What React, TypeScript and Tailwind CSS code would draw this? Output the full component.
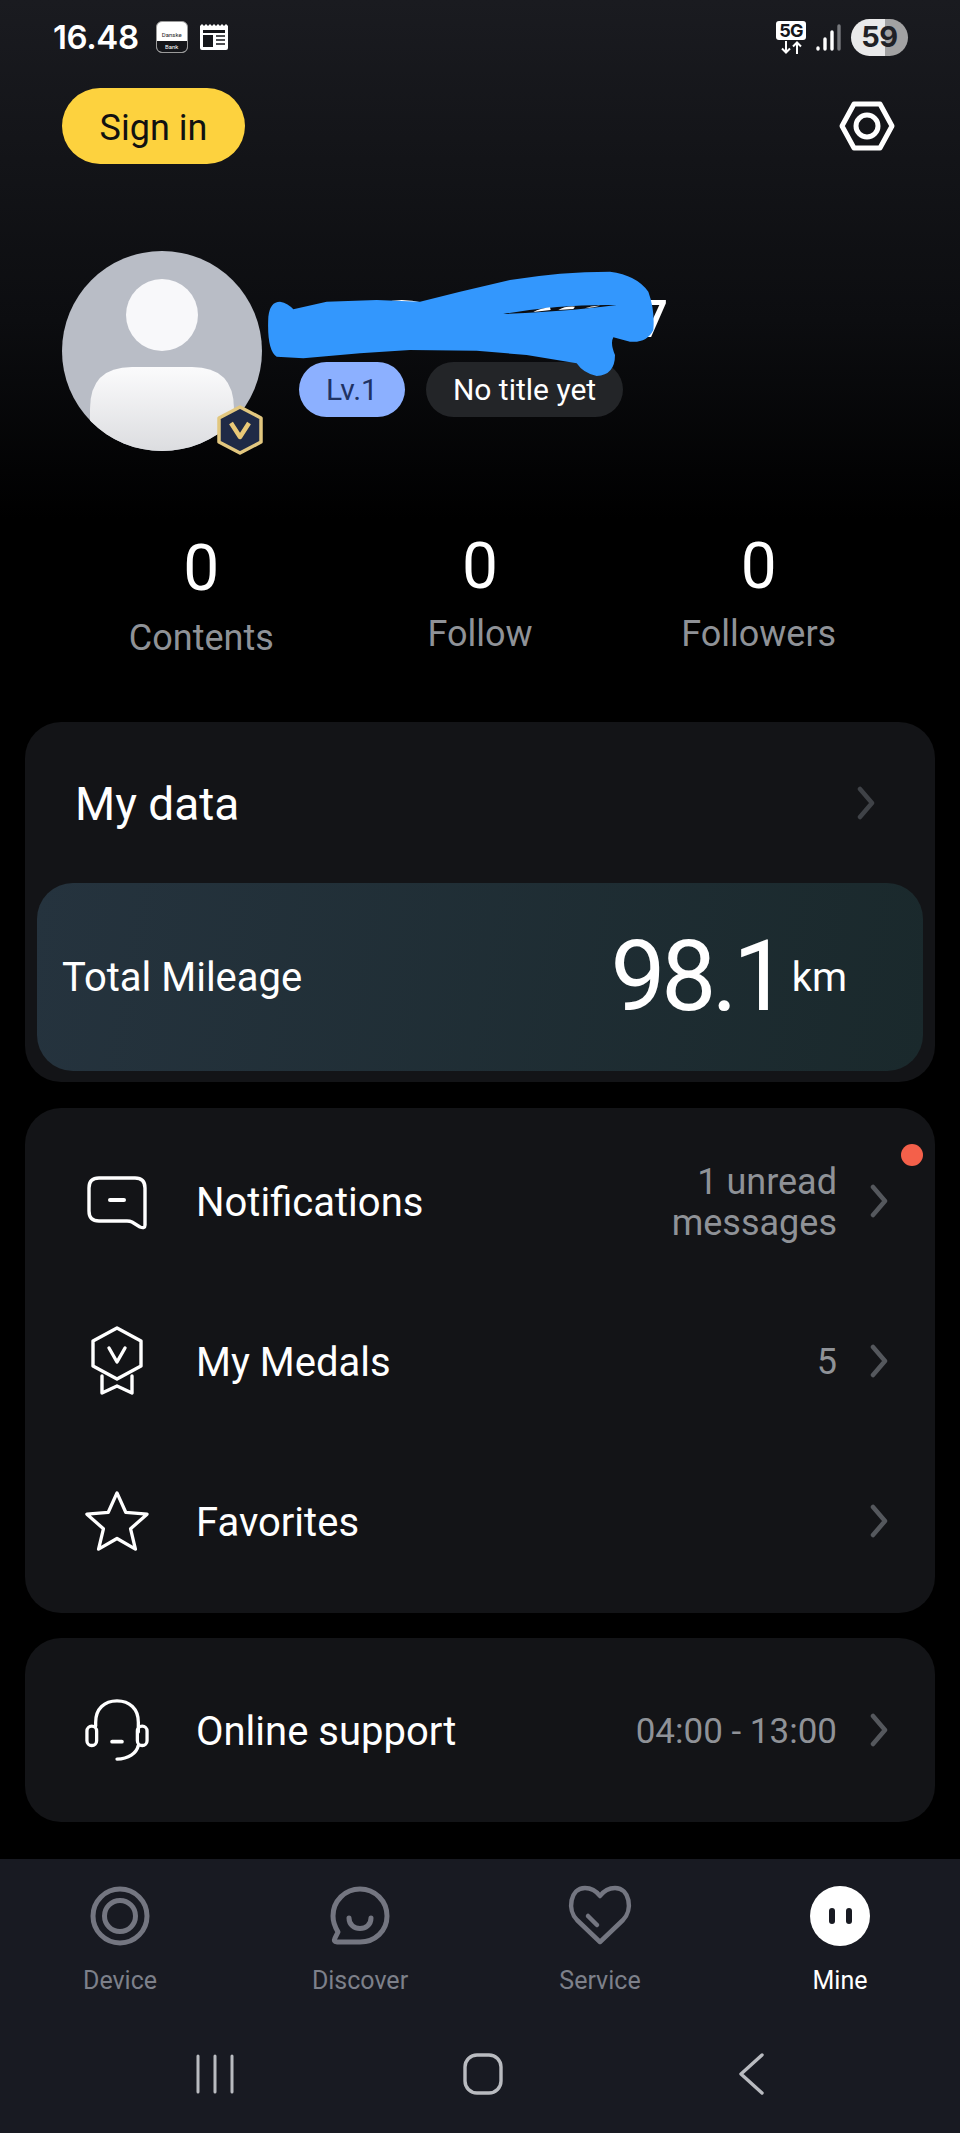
import React from "react";

const Chevron = ({ color = "#55585d" }: { color?: string }) => (
  <svg width="18" height="34" viewBox="0 0 18 34" fill="none" stroke={color} strokeWidth="4.5" strokeLinecap="round" strokeLinejoin="round">
    <path d="M3 3 L15 17 L3 31" />
  </svg>
);

const StatusBar = () => (
  <div className="h-[72px] flex items-center justify-between pl-[53px] pr-[52px] pt-[2px]">
    <div className="flex items-center">
      <span className="font-[family-name:Inter,sans-serif] font-semibold text-[33px] leading-none text-white tracking-[-0.4px]">16.48</span>
      <div className="ml-[17px] w-[32px] h-[32px] rounded-[6px] overflow-hidden bg-white flex flex-col border border-[#9a9a9a]">
        <div className="flex-1 flex items-center justify-center text-[6px] text-[#222] pt-[5px]">Danske</div>
        <div className="h-[11px] bg-[#15161a] flex items-center justify-center text-[6px] text-white">Bank</div>
      </div>
      <svg className="ml-[11px]" width="30" height="28" viewBox="0 0 30 28">
        <path d="M1 3 l2 -2 2 2 2 -2 2 2 2 -2 2 2 2 -2 2 2 2 -2 2 2 2 -2 2 2 2 -2 2 2 V25 a2 2 0 0 1 -2 2 H3 a2 2 0 0 1 -2 -2 Z" fill="#fff" />
        <rect x="4" y="7" width="22" height="3" fill="#15161a" />
        <rect x="4" y="12" width="10" height="12" fill="#15161a" />
        <path d="M17 13 H26 M17 17 H26 M17 21 H26" stroke="#15161a" strokeWidth="1.6" />
      </svg>
    </div>
    <div className="flex items-center">
      <div className="w-[30px] flex flex-col items-center">
        <div className="w-[30px] h-[19px] bg-white rounded-[3px] text-[#15161a] font-bold text-[18px] leading-[19px] text-center font-[family-name:Inter,sans-serif] tracking-[-0.8px]">5G</div>
        <svg className="mt-[1px]" width="24" height="13" viewBox="0 0 24 13" fill="none" stroke="#fff" strokeWidth="2">
          <path d="M7 0 V11 M3 7.5 L7 11.5 L11 7.5 M18 13 V2 M14 5.5 L18 1.5 L22 5.5" />
        </svg>
      </div>
      <svg className="ml-[10px]" width="25" height="27" viewBox="0 0 25 27" strokeLinecap="round" strokeWidth="3.4">
        <path d="M2 24 V25 M9 15 V25 M16 8 V25" stroke="#fff" />
        <path d="M23 2 V25" stroke="#77797d" />
      </svg>
      <div className="ml-[10px] w-[57px] h-[37px] rounded-full bg-[linear-gradient(90deg,#e9e9ea_60%,#a2a2a3_60%)] flex items-center justify-center font-[family-name:Inter,sans-serif] font-bold text-[29px] text-[#202126] tracking-[-0.5px]">59</div>
    </div>
  </div>
);

const Scribble = () => (
  <svg className="absolute left-[260px] top-[9px]" width="420" height="130" viewBox="0 0 1260 390">
    <path fill="#fff" d="M372 128 Q420 112 490 128 Z" />
    <path
      fill="#3397fd"
      d="M25 170 Q30 125 60 125 Q85 130 100 148 L200 125 L350 120 L480 125 L600 95 L750 60 Q900 35 1050 35 Q1130 45 1165 95 Q1185 150 1180 210 Q1160 250 1110 245 L1060 232 Q1050 250 1065 285 Q1065 345 1010 348 Q970 340 950 310 L800 285 L650 272 L450 270 L300 280 L130 295 L50 290 Q20 270 25 170 Z"
    />
    <path fill="#0c0d10" d="M730 162 Q900 132 1070 135 Q950 152 730 162 Z" />
    <path fill="#fff" d="M820 156 Q840 145 870 142 L872 150 Z M895 150 Q915 138 945 140 L940 147 Z M975 145 Q995 136 1020 137 L1000 142 Z" />
  </svg>
);

const Profile = () => (
  <div className="mt-[87px] pl-[62px] flex items-start relative">
    <div className="relative w-[200px] h-[200px]">
      <svg width="200" height="200" viewBox="0 0 200 200">
        <defs>
          <linearGradient id="bodyG" x1="0" y1="0" x2="0" y2="1">
            <stop offset="0" stopColor="#fbfbfc" />
            <stop offset="1" stopColor="#dcdde0" />
          </linearGradient>
          <clipPath id="avClip">
            <circle cx="100" cy="100" r="100" />
          </clipPath>
        </defs>
        <circle cx="100" cy="100" r="100" fill="#b9bdc6" />
        <circle cx="100" cy="64" r="36" fill="#f8f8fa" />
        <path clipPath="url(#avClip)" d="M28 200 V158 Q28 116 70 116 H130 Q172 116 172 158 V200 Z" fill="url(#bodyG)" />
      </svg>
      <svg className="absolute left-[154px] top-[153px]" width="48" height="52" viewBox="0 0 48 52">
        <path d="M24 3 L45 14 V38 L24 49 L3 38 V14 Z" fill="#1f2a46" stroke="#e2c77f" strokeWidth="3.5" strokeLinejoin="round" />
        <path d="M15 19 L24 33 L33 19" fill="none" stroke="#e9c877" strokeWidth="4.5" strokeLinejoin="round" />
      </svg>
    </div>
    <div className="ml-[37px] w-[369px] pt-[41px]">
      <div className="h-[70px] flex justify-end items-start text-white text-[52px] leading-[56px] font-medium">7</div>
      <div className="flex gap-[21px]">
        <div className="w-[106px] h-[55px] rounded-full bg-[#8cb0ff] flex items-center justify-center text-[30px] text-[#1f3263]">Lv.1</div>
        <div className="w-[197px] h-[55px] rounded-full bg-[#232528] flex items-center justify-center text-[30px] text-white">No title yet</div>
      </div>
    </div>
    <Scribble />
  </div>
);

const Stat = ({ n, label, low }: { n: string; label: string; low?: boolean }) => (
  <div className={`flex flex-col items-center ${low ? "pt-[2px]" : ""}`}>
    <div className="text-[64px] leading-[70px] text-white">{n}</div>
    <div className={`${low ? "mt-[10px]" : "mt-[8px]"} text-[36px] leading-[48px] text-[#8f9297]`}>{label}</div>
  </div>
);

const Row = ({ icon, label, right, rightClass }: { icon: React.ReactNode; label: string; right?: React.ReactNode; rightClass?: string }) => (
  <div className="h-[160px] flex items-center pl-[60px] pr-[47px]">
    <div className="w-[64px] h-[80px] flex items-center justify-center">{icon}</div>
    <div className="ml-[47px] pt-[3px] text-[40px] text-white flex-1">{label}</div>
    {right && <div className={`text-right pt-[3px] leading-[41px] text-[#8f9297] ${rightClass ?? "text-[36px]"}`}>{right}</div>}
    <div className="ml-[33px]"><Chevron /></div>
  </div>
);

const iconStroke = { fill: "none", stroke: "#fff", strokeWidth: 3.4, strokeLinecap: "round" as const, strokeLinejoin: "round" as const };

const NotifIcon = () => (
  <svg className="mt-[4px]" width="60" height="54" viewBox="0 0 60 54" {...iconStroke}>
    <path d="M12 2 H48 Q58 2 58 12 V49 Q58 53 53 51 L45 46 Q43 45 40 45 H12 Q2 45 2 35 V12 Q2 2 12 2 Z" />
    <path d="M23 24 H37" strokeWidth="4" />
  </svg>
);
const MedalIcon = () => (
  <svg width="54" height="70" viewBox="0 0 54 70" {...iconStroke}>
    <path d="M27 2 L51 15 V40 L27 53 L3 40 V15 Z" />
    <path d="M19 22 L27 36 L35 22" />
    <path d="M12 50 V67 L27 60 L42 67 V50" />
  </svg>
);
const StarIcon = () => (
  <svg width="66" height="62" viewBox="0 0 66 62" {...iconStroke}>
    <path d="M33 2 L42 22 L64 24 L47 39 L52 60 L33 49 L14 60 L19 39 L2 24 L24 22 Z" />
  </svg>
);
const SupportIcon = () => (
  <svg width="66" height="64" viewBox="0 0 66 64" {...iconStroke}>
    <path d="M11 28 V24 C11 10 20 2 33 2 C46 2 55 10 55 24 V34" />
    <rect x="2" y="28" width="10" height="20" rx="5" />
    <rect x="54" y="28" width="10" height="20" rx="5" />
    <path d="M28 44 H38" strokeWidth="4" />
    <path d="M55 48 C53 56 45 62 33 62" />
  </svg>
);

const Tab = ({ icon, label, active }: { icon: React.ReactNode; label: string; active?: boolean }) => (
  <div className="flex flex-col items-center">
    <div className="h-[62px] flex items-center justify-center">{icon}</div>
    <div className={`mt-[20px] text-[25px] leading-[28px] ${active ? "text-white" : "text-[#7d808a]"}`}>{label}</div>
  </div>
);

const navStroke = { fill: "none", stroke: "#747681", strokeLinecap: "round" as const, strokeLinejoin: "round" as const };

export default function App() {
  return (
    <div className="w-[960px] h-[2133px] overflow-hidden flex flex-col bg-black font-[family-name:Roboto,sans-serif]">
      <div className="h-[722px] bg-[linear-gradient(180deg,#1a1b20_0px,#0c0d10_320px,#000000_520px)]">
        <StatusBar />
        <div className="mt-[16px] h-[76px] pl-[62px] pr-[65px] flex items-center justify-between">
          <div className="w-[183px] h-[76px] pt-[4px] rounded-full bg-[#fdd23e] flex items-center justify-center text-[36px] text-[#111]">Sign in</div>
          <svg width="56" height="50" viewBox="0 0 56 50" fill="none" stroke="#fff" strokeWidth="5" strokeLinejoin="round">
            <path d="M3 25 L15 3 H41 L53 25 L41 47 H15 Z" />
            <circle cx="28" cy="25" r="11" />
          </svg>
        </div>
        <Profile />
        <div className="mt-[81px] px-[62px] grid grid-cols-3">
          <Stat n="0" label="Contents" low />
          <Stat n="0" label="Follow" />
          <Stat n="0" label="Followers" />
        </div>
      </div>

      <div className="mx-[25px] h-[360px] rounded-[36px] bg-[#131417] px-[12px] pb-[11px] flex flex-col">
        <div className="flex-1 flex items-center justify-between pl-[38px] pr-[48px]">
          <div className="text-[46px] pt-[4px] text-white">My data</div>
          <Chevron color="#3f4247" />
        </div>
        <div className="h-[188px] rounded-[36px] bg-[linear-gradient(100deg,#25333e,#1a292c)] flex items-center pl-[25px] pr-[76px]">
          <div className="text-[40px] pt-[2px] text-white flex-1">Total Mileage</div>
          <div className="text-[98px] leading-none text-white tracking-[-4.5px]">98.1</div>
          <div className="ml-[8px] text-[40px] pt-[2px] text-white">km</div>
        </div>
      </div>

      <div className="relative mt-[26px] mx-[25px] h-[505px] rounded-[36px] bg-[#131417] py-[13px]">
        <Row icon={<NotifIcon />} label="Notifications" right={<>1 unread<br />messages</>} />
        <Row icon={<MedalIcon />} label="My Medals" right="5" />
        <Row icon={<StarIcon />} label="Favorites" />
        <div className="absolute right-[12px] top-[36px] w-[22px] h-[22px] rounded-full bg-[#f4604a]" />
      </div>

      <div className="mt-[25px] mx-[25px] h-[184px] rounded-[36px] bg-[#131417] flex flex-col justify-center">
        <Row icon={<SupportIcon />} label="Online support" right="04:00 - 13:00" rightClass="text-[35px]" />
      </div>

      <div className="mt-[37px] flex-1 bg-[#181a22] flex flex-col">
        <div className="pt-[26px] grid grid-cols-4">
          <Tab label="Device" icon={
            <svg width="60" height="60" viewBox="0 0 60 60" {...navStroke} strokeWidth="5">
              <circle cx="30" cy="30" r="27" />
              <circle cx="30" cy="30" r="15.5" />
            </svg>
          } />
          <Tab label="Discover" icon={
            <svg width="60" height="60" viewBox="0 0 60 60" {...navStroke} strokeWidth="5">
              <path d="M30 3 C45 3 57 15 57 30 C57 45 45 56 30 56 H7 Q3 56 5 52 L8 46 C5 41 3 36 3 30 C3 15 15 3 30 3 Z" />
              <path d="M19 32 C19 46 41 46 41 32" />
            </svg>
          } />
          <Tab label="Service" icon={
            <svg width="64" height="62" viewBox="0 0 64 62" {...navStroke} strokeWidth="4.5">
              <path d="M32 57 L9 35 C-1 25 2 3 17 3 C24 3 29 7 32 11 C35 7 40 3 47 3 C62 3 65 25 55 35 Z" />
              <path d="M20 31 L29 40" />
            </svg>
          } />
          <Tab active label="Mine" icon={
            <div className="w-[60px] h-[60px] rounded-full bg-white flex items-center justify-center gap-[11px]">
              <div className="w-[6px] h-[16px] rounded-full bg-[#181a22]" />
              <div className="w-[6px] h-[16px] rounded-full bg-[#181a22]" />
            </div>
          } />
        </div>
        <div className="mt-[58px] pl-[81px] flex">
          <div className="w-[268px] h-[42px] flex items-center justify-center">
            <svg width="38" height="40" viewBox="0 0 38 40" stroke="#b9bbc0" strokeWidth="3" strokeLinecap="round">
              <path d="M2 2 V38 M19 2 V38 M36 2 V38" />
            </svg>
          </div>
          <div className="w-[268px] h-[42px] flex items-center justify-center">
            <svg width="40" height="42" viewBox="0 0 40 42" fill="none" stroke="#b9bbc0" strokeWidth="3.4">
              <rect x="2" y="2" width="36" height="38" rx="12" />
            </svg>
          </div>
          <div className="w-[268px] h-[42px] flex items-center justify-center">
            <svg width="26" height="42" viewBox="0 0 26 42" fill="none" stroke="#b9bbc0" strokeWidth="3.4" strokeLinecap="round" strokeLinejoin="round">
              <path d="M24 2 L3 21 L24 40" />
            </svg>
          </div>
        </div>
      </div>
    </div>
  );
}
